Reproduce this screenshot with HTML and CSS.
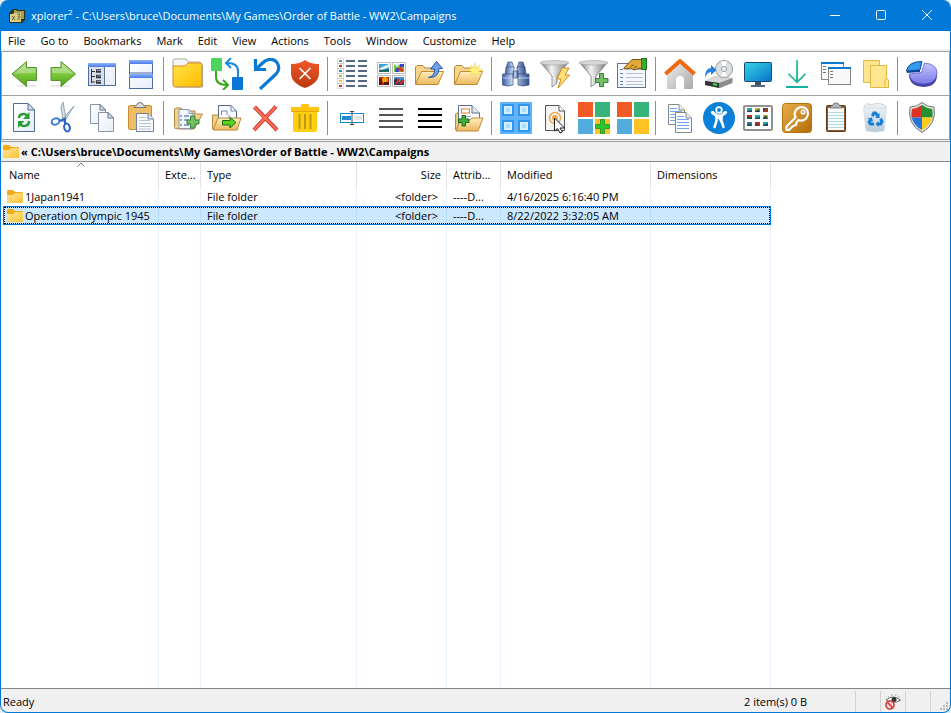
FILE: index.html
```html
<!DOCTYPE html>
<html lang="en">
<head>
<meta charset="utf-8">
<title>xplorer² - Campaigns</title>
<link rel="stylesheet" href="styles.css">
</head>
<body>
<svg class="defs" aria-hidden="true">
  <defs>
    <linearGradient id="gGreen" x1="0" y1="0" x2="0" y2="1"><stop offset="0" stop-color="#a9dc7c"/><stop offset=".5" stop-color="#7cc73c"/><stop offset="1" stop-color="#4ea313"/></linearGradient>
    <linearGradient id="gPaper" x1="0" y1="0" x2="1" y2="1"><stop offset="0" stop-color="#fff"/><stop offset="1" stop-color="#e6edf9"/></linearGradient>
    <linearGradient id="gBar" x1="0" y1="0" x2="0" y2="1"><stop offset="0" stop-color="#8db2fb"/><stop offset="1" stop-color="#4a7bea"/></linearGradient>
    <linearGradient id="gYellow" x1="0" y1="0" x2="1" y2="1"><stop offset="0" stop-color="#ffe648"/><stop offset="1" stop-color="#ffb900"/></linearGradient>
    <linearGradient id="gFold" x1="0" y1="0" x2="0" y2="1"><stop offset="0" stop-color="#fff0bd"/><stop offset="1" stop-color="#edb75c"/></linearGradient>
    <linearGradient id="gSmall" x1="0" y1="0" x2="1" y2="1"><stop offset="0" stop-color="#ffe597"/><stop offset="1" stop-color="#fbc335"/></linearGradient>
    <linearGradient id="gMetal" x1="0" y1="0" x2="1" y2="0"><stop offset="0" stop-color="#777"/><stop offset=".4" stop-color="#f4f4f4"/><stop offset="1" stop-color="#777"/></linearGradient>
    <linearGradient id="gSteel" x1="0" y1="0" x2="1" y2="0"><stop offset="0" stop-color="#3c5fa0"/><stop offset=".4" stop-color="#d5e3fa"/><stop offset="1" stop-color="#2c4a88"/></linearGradient>
    <linearGradient id="gHouse" x1="0" y1="0" x2="1" y2="1"><stop offset="0" stop-color="#eee"/><stop offset="1" stop-color="#aaa"/></linearGradient>
    <linearGradient id="gScreen" x1="0" y1="0" x2="1" y2="1"><stop offset="0" stop-color="#35d5e4"/><stop offset="1" stop-color="#0872ca"/></linearGradient>
    <linearGradient id="gDown" x1="0" y1="0" x2="0" y2="1"><stop offset="0" stop-color="#45cf8a"/><stop offset="1" stop-color="#10b0a2"/></linearGradient>
    <linearGradient id="gShield" x1="0" y1="0" x2="0" y2="1"><stop offset="0" stop-color="#f2582a"/><stop offset="1" stop-color="#b93a0e"/></linearGradient>
    <linearGradient id="gKey" x1="0" y1="0" x2="1" y2="1"><stop offset="0" stop-color="#e9ae4b"/><stop offset="1" stop-color="#b36c09"/></linearGradient>
    <linearGradient id="gPie" x1="0" y1="0" x2="0" y2="1"><stop offset="0" stop-color="#c6c6ff"/><stop offset="1" stop-color="#7a7ae8"/></linearGradient>
    <linearGradient id="gBin" x1="0" y1="0" x2="0" y2="1"><stop offset="0" stop-color="#e9f0f5"/><stop offset="1" stop-color="#b9cbd8"/></linearGradient>
    <symbol id="small-folder" viewBox="0 0 16 13"><path d="M0 2Q0 0 1 0H6L8 2H15Q16 2 16 3V12Q16 13 15 13H1Q0 13 0 12Z" fill="#f3ab13"/><path d="M0 5H6L8 3H16V12Q16 13 15 13H1Q0 13 0 12Z" fill="url(#gSmall)"/></symbol>
    <symbol id="open-folder" viewBox="0 0 32 32"><path d="M1.5 26V9L3 7.5H9L11 10H24.500V14" fill="#f5d58b" stroke="#b98a3c"/><path d="M1.500 26.500L7.500 13.500H29.500L24 26.500Z" fill="url(#gFold)" stroke="#c38a35"/></symbol>
    <symbol id="funnel" viewBox="0 0 32 32"><path d="M2 5L13 18V29L18 25V18L29 5Z" fill="url(#gMetal)" stroke="#777" stroke-width=".8"/><ellipse cx="15.500" cy="4.800" rx="14.500" ry="2.200" fill="#d7d7d7" stroke="#aaa" stroke-width=".7"/></symbol>
    <symbol id="sheet" viewBox="0 0 16 20"><path d="M.5.5H10L15.500 6V19.500H.5Z" fill="url(#gPaper)" stroke="#8794ab"/><path d="M10 .5V6H15.500Z" fill="#dce5f4" stroke="#60718f"/></symbol>
    <symbol id="lined-sheet" viewBox="0 0 17 21"><path d="M.5.5H11L16.500 6V20.500H.5Z" fill="#fff" stroke="#878787"/><path d="M11 .5V6H16.500" fill="#eee" stroke="#878787"/><path d="M2 4.500H9M2 7.500H14M2 10.500H14M2 13.500H14M2 16.500H14" stroke="#6da9f3"/></symbol>
  </defs>
</svg>

<div class="window">
  <header class="titlebar">
    <svg class="app-icon" viewBox="0 0 16 14"><path d="M4 0H8L9 1H16V11L13 14H0V4Z" fill="#34301a"/><path d="M5 1H7L8 2H15V10H5Z" fill="#a89f56"/><path d="M1 5H4L5 4H12V13H1Z" fill="#d8cf85"/><path d="M3 7L6 11M6 7L3 11M8 5H11L9 8H12M8 10H11" stroke="#5b5428" fill="none" stroke-width=".8"/></svg>
    <h1 class="title">xplorer<sup>2</sup> - C:\Users\bruce\Documents\My Games\Order of Battle - WW2\Campaigns</h1>
    <button class="caption" aria-label="Minimize"><svg viewBox="0 0 12 12"><path d="M1 5.500H11"/></svg></button>
    <button class="caption" aria-label="Maximize"><svg viewBox="0 0 12 12"><rect x="1.500" y=".5" width="9" height="9" rx="1"/></svg></button>
    <button class="caption" aria-label="Close"><svg viewBox="0 0 12 12"><path d="M1 0L11 10M11 0L1 10"/></svg></button>
  </header>

  <nav class="menubar" aria-label="Menu">
    <button>File</button><button>Go to</button><button>Bookmarks</button><button>Mark</button><button>Edit</button><button>View</button><button>Actions</button><button>Tools</button><button>Window</button><button>Customize</button><button>Help</button>
  </nav>

  <section class="toolbars">
    <div class="toolbar" role="toolbar" aria-label="Navigation">
      <div class="group">
        <button aria-label="Back"><svg viewBox="0 0 32 32"><ellipse cx="19" cy="28" rx="11" ry="1.500" fill="#e9e9e9"/><path d="M4 16L18.500 3.500V9.500H28.500V22.500H18.500V28.500Z" fill="url(#gGreen)" stroke="#579331"/><path d="M6 15.500L17.500 6V10.500H27.500V15Z" fill="#fff" opacity=".3"/></svg></button>
        <button aria-label="Forward"><svg viewBox="0 0 32 32"><ellipse cx="13" cy="28" rx="11" ry="1.500" fill="#e9e9e9"/><path d="M28.500 16L14 3.500V9.500H4V22.500H14V28.500Z" fill="url(#gGreen)" stroke="#579331"/><path d="M26.500 15.500L15 6V10.500H5V15Z" fill="#fff" opacity=".3"/></svg></button>
        <button aria-label="Folder tree"><svg viewBox="0 0 32 32"><rect x="2.500" y="5.500" width="27" height="22" fill="url(#gPaper)" stroke="#4c6b9e"/><rect x="2" y="5" width="28" height="4" fill="url(#gBar)"/><rect x="3" y="9" width="15" height="18" fill="#d9dfe9"/><path d="M18.500 9V28" stroke="#59749f"/><path d="M5.500 11V25M6 13.500H9M6 18.500H9M6 24H9" stroke="#333" fill="none"/><path d="M10 13H15M10 18.500H15M10 24H15" stroke="#334" stroke-width="3.500"/><path d="M11 12.500H15M11 18H15M11 23.500H15" stroke="#99a"/></svg></button>
        <button aria-label="Split panes"><svg viewBox="0 0 32 32"><rect x="4.500" y="2.500" width="23" height="28" fill="url(#gPaper)" stroke="#4c6b9e"/><rect x="4" y="2" width="24" height="4" fill="url(#gBar)"/><path d="M5 15H27" stroke="#4c6b9e"/><rect x="4" y="16" width="24" height="4" fill="url(#gBar)"/></svg></button>
      </div>
      <div class="group">
        <button aria-label="Open folder"><svg viewBox="0 0 32 32"><path d="M1 8V3Q1 1 3 1H14L16 4H27Q29 4 29 6V8" fill="#f6f6f6" stroke="#aaa"/><path d="M1 8H13L16 5H28Q30 5 30 7V26Q30 29 28 29H3Q1 29 1 26Z" fill="url(#gYellow)" stroke="#e3831b"/><path d="M30.500 7V29H4" fill="none" stroke="#b3a482"/></svg></button>
        <button aria-label="Swap panes"><svg viewBox="0 0 32 32"><rect width="11" height="13" rx="1" fill="#4cd45f"/><rect x="21" y="19" width="11" height="13" rx="1" fill="#0876d5"/><path d="M5 13V19Q5 27 16 27M12 22L17 27L12 32" fill="none" stroke="#39a51d" stroke-width="2"/><path d="M27 19V13Q27 5 16 5M20 0L15 5L20 10" fill="none" stroke="#178be0" stroke-width="2"/></svg></button>
        <button aria-label="Undo"><svg viewBox="0 0 32 32"><path d="M5.500 1V11.500H16M5.500 11.500L12 5.500C17 .5 23 0 26.500 4C30 8 29 13 26 16L10 31" fill="none" stroke="#0b78d4" stroke-width="3.200"/></svg></button>
        <button aria-label="Stop"><svg viewBox="0 0 32 32"><path d="M16 2Q21 6 30 6V15Q30 25 16 30Q2 25 2 15V6Q11 6 16 2Z" fill="url(#gShield)"/><path d="M10.500 10L21.500 21M21.500 10L10.500 21" stroke="#fff" stroke-width="1.700"/></svg></button>
      </div>
      <div class="group">
        <button aria-label="Details view"><svg viewBox="0 0 32 32"><rect x="1.500" y=".5" width="6" height="30" fill="#fff" stroke="#ddd"/><path d="M1 5.500H8M1 10.500H8M1 15.500H8M1 20.500H8M1 25.500H8" stroke="#ccc"/><path d="M3 3H6" stroke="#55a277" stroke-width="2"/><path d="M3 8H6M3 28H6" stroke="#e92c20" stroke-width="2"/><path d="M3 13H6" stroke="#248ee6" stroke-width="2"/><path d="M3 18H6" stroke="#97c61b" stroke-width="2"/><path d="M3 23H6" stroke="#e7ce23" stroke-width="2"/><path d="M10 3H19M22 3H31M10 8H19M22 8H31M10 13H19M22 13H31M10 18H19M22 18H31M10 23H19M22 23H31M10 28H19M22 28H31" stroke="#546986" stroke-width="2"/></svg></button>
        <button aria-label="Thumbnails"><svg viewBox="0 0 32 32"><g fill="#fff" stroke="#bbb"><path d="M2.500 4.500H15.500V15.500H2.500ZM17.500 4.500H30.500V15.500H17.500ZM2.500 17.500H15.500V28.500H2.500ZM17.500 17.500H30.500V28.500H17.500Z"/></g><path d="M4 6H14V14H4Z" fill="#35a3dc"/><path d="M4 11L7 9L14 6V9L8 12L14 13V14H4Z" fill="#e5f2ec"/><path d="M4 12L14 11V14H4Z" fill="#1c6b60"/><path d="M19 6H29V14H19Z" fill="#71c22e"/><path d="M19 6H25L22 9Z" fill="#dcecff"/><path d="M21 10H24V14H20ZM25 6H29V9H25Z" fill="#3c43cd"/><path d="M24 10L28 13" stroke="#ec2d17" stroke-width="3"/><path d="M4 19H14V27H4Z" fill="#c21b0c"/><circle cx="10" cy="22" r="3" fill="#f1a20c"/><path d="M4 21H7V27H4ZM9 24H14V27H9Z" fill="#571610"/><path d="M19 19H29V27H19Z" fill="#3f90d3"/><path d="M19 27V22L22 20L24 25L27 21L29 24V27Z" fill="#213a5d"/><path d="M21 26L24 21M25 26L29 22" stroke="#e52b1b" stroke-width="2"/></svg></button>
        <button aria-label="Parent folder"><svg viewBox="0 0 32 32"><use href="#open-folder"/><path d="M14.500 19.500Q21 18 20.500 11H16.500L22.500 3.500L28.500 10.500H25Q25 20 14.500 19.500Z" fill="#6da0e7" stroke="#2a58aa"/></svg></button>
        <button aria-label="New folder"><svg viewBox="0 0 32 32"><use href="#open-folder"/><path d="M22 5L23.200 10L27 7L25 11L30 12L25.500 13.500L27 18L23.200 15L22 19L20.500 15L17 18L18.500 13.500L14 12L18.500 10.500L17 7L20.500 10Z" fill="#fff37e" stroke="#f0d050" stroke-width=".6"/></svg></button>
      </div>
      <div class="group">
        <button aria-label="Find"><svg viewBox="0 0 32 32"><g stroke="#385586" stroke-width=".7" fill="url(#gSteel)"><path d="M8 4H12L14 10H6ZM19 4H23L25 10H17Z"/><path d="M6 9H14V17H5ZM17 9H25L26 17H17Z"/><path d="M2.500 16H13V27Q8 29 2.500 27ZM18 16H29V27Q23 29 18 27Z"/><path d="M13 13H18V20H13Z"/></g><path d="M3 20H13M18 20H29" stroke="#b9cdf0"/></svg></button>
        <button aria-label="Quick filter"><svg viewBox="0 0 32 32"><use href="#funnel"/><path d="M23 10H30L26 17H30.500L19 30L22 21H18Z" fill="#ffe078" stroke="#cf8b21"/></svg></button>
        <button aria-label="Add filter"><svg viewBox="0 0 32 32"><use href="#funnel"/><path d="M21.500 15.500H25.500V20.500H30V24.500H25.500V28.500H21.500V24.500H17.500V20.500H21.500Z" fill="#75bd67" stroke="#32852e"/></svg></button>
        <button aria-label="Properties"><svg viewBox="0 0 32 32"><rect x=".5" y="5.500" width="28" height="24" fill="#f5f8fe" stroke="#64748e"/><path d="M3 11.500H6M3 15.500H6M3 19.500H6M3 23.500H6M3 26.500H6" stroke="#6585b5"/><path d="M9 11.500H26M9 15.500H26M9 19.500H26M9 23.500H26M9 26.500H26" stroke="#bbc1ce"/><path d="M6.500 10.500L15 1.500H25V10L20 11L17 12L14 10L8 11Z" fill="#e3aa39" stroke="#795411"/><path d="M14 8L17 7M17 10L20 8" stroke="#795411"/><rect x="24.500" y=".5" width="5" height="11" fill="#36ad30" stroke="#247224"/></svg></button>
      </div>
      <div class="group">
        <button aria-label="Home"><svg viewBox="0 0 32 32"><path d="M3 15L16 4L29 15V30Q29 31 28 31H20V22Q20 18 16 18Q12 18 12 22V31H4Q3 31 3 30Z" fill="url(#gHouse)"/><path d="M1.500 16L16 3L30.500 16" fill="none" stroke="#ee6910" stroke-width="4" stroke-linejoin="round"/></svg></button>
        <button aria-label="Drives"><svg viewBox="0 0 32 32"><path d="M2 23L12 18L29.500 20V25L17 30L2 27Z" fill="#8c8c8c"/><path d="M2 23L12 18L29.500 20L16 25Z" fill="#d8d8d8"/><path d="M2 23L16 25V30L2 27Z" fill="#343434"/><path d="M10 26L14 27" stroke="#33e043" stroke-width="2"/><circle cx="21" cy="11" r="8.500" fill="#dce0e2" stroke="#9a9a9a"/><path d="M21 11L18 3.500L24 3.500ZM21 11L18 18.500H24Z" fill="#fff"/><circle cx="21" cy="11" r="2.500" fill="#f4f4f4" stroke="#999"/><path d="M2 20Q2 10 8 10V7L13.500 12L8 17V14Q4 14 2 20Z" fill="#2581dc"/></svg></button>
        <button aria-label="Computer"><svg viewBox="0 0 32 32"><rect x="2.500" y="4.500" width="27" height="19" rx="1" fill="url(#gScreen)" stroke="#144a73"/><path d="M13 24H19V27H13Z" fill="#3f5366"/><path d="M9 28H23" stroke="#56697a" stroke-width="2"/></svg></button>
        <button aria-label="Downloads"><svg viewBox="0 0 32 32"><path d="M15 2H17V22L24 15L25 16.500L16 25.500L7 16.500L8 15L15 22ZM5 28H27V30H5Z" fill="url(#gDown)"/></svg></button>
        <button aria-label="New window"><svg viewBox="0 0 32 32"><g fill="#f9f9f9" stroke="#888"><rect x="1.500" y="4.500" width="22" height="17"/><rect x="8.500" y="9.500" width="22" height="17"/></g><path d="M1 5H24M8 10H31" stroke="#0c79d5" stroke-width="2"/><path d="M3 8.500H6M3 11.500H6M3 14.500H6M10 13.500H13M10 16.500H13M10 19.500H13" stroke="#777"/></svg></button>
        <button aria-label="Copy folders"><svg viewBox="0 0 32 32"><g fill="#ffe690" stroke="#dfb846"><path d="M4.500 2.500H20.500V24.500H4.500Z"/><path d="M11.500 7.500H27.500V20.500L29.500 22V29.500H11.500Z"/><path d="M27.500 20.500L26 22V29.500H29.500V22Z"/></g></svg></button>
      </div>
      <div class="group">
        <button aria-label="Disk usage"><svg viewBox="0 0 32 32"><path d="M3 16H31V18Q30 29 17 29Q4 28 3 18Z" fill="#4343a2"/><path d="M15.500 14.500L18.500 5Q31 6 31 15Q30 26 17 26Q4 25 3 16Z" fill="url(#gPie)" stroke="#5353bf" stroke-width=".7"/><path d="M.5 13Q2 3.500 16 3.500L14 12Z" fill="#3798f0" stroke="#0d4b97"/><path d="M.5 13L14 12V14L1 15Z" fill="#0b4998"/></svg></button>
      </div>
    </div>

    <div class="toolbar" role="toolbar" aria-label="Actions">
      <div class="group">
        <button aria-label="Refresh"><svg viewBox="0 0 32 32"><path d="M5.500 1.500H20L26.500 8V29.500H5.500Z" fill="url(#gPaper)" stroke="#536b91"/><path d="M20 1.500V8H26.500Z" fill="#dce7f5" stroke="#536b91"/><path d="M11 16Q11 12 16 12Q18 12 19.500 14M21 19Q21 24 16 24Q13 24 12 22" fill="none" stroke="#2c9d36" stroke-width="2.500"/><path d="M21.500 10V17H15ZM10 26V19H16.500Z" fill="#2c9d36"/></svg></button>
        <button aria-label="Cut"><svg viewBox="0 0 32 32"><path d="M16 0L19 17L16 19L14 5ZM27 4L17 20L14 19Z" fill="#d5dfe8" stroke="#8193a3" stroke-width=".8"/><ellipse cx="8.500" cy="19.500" rx="4" ry="3" transform="rotate(-20 8.500 19.500)" fill="none" stroke="#3e7bd8" stroke-width="2"/><ellipse cx="20" cy="25.500" rx="2.800" ry="4" transform="rotate(-15 20 25.500)" fill="none" stroke="#2865c8" stroke-width="2"/><path d="M12 19L18 17L18 22" fill="none" stroke="#2865c8" stroke-width="2"/></svg></button>
        <button aria-label="Copy"><svg viewBox="0 0 32 32"><use href="#sheet" x="4" y="2" width="16" height="20"/><use href="#sheet" x="12" y="10" width="16" height="20"/></svg></button>
        <button aria-label="Paste"><svg viewBox="0 0 32 32"><rect x="3.500" y="3.500" width="23" height="24" rx="1.500" fill="#efbd63" stroke="#c68c36"/><path d="M9 5.500Q9 4 12 3Q12 .5 15 .5Q18 .5 18 3Q21 4 21 5.500Z" fill="#ddd" stroke="#777"/><path d="M11.500 11.500H23L28.500 17V29.500H11.500Z" fill="#f8fafd" stroke="#71809b"/><path d="M23 11.500V17H28.500" fill="#dfe7f3" stroke="#71809b"/><path d="M14 15.500H21M14 18.500H25M14 21.500H26M14 24.500H26M14 27H26" stroke="#bbc3d1"/></svg></button>
      </div>
      <div class="group">
        <button aria-label="Copy to"><svg viewBox="0 0 32 32"><path d="M2.500 25V7L4 6H9L11 9H23V14" fill="#efd18c" stroke="#ad843c"/><path d="M2 26L8 27H22L30.500 12H20" fill="#f3d391" stroke="#b88a3d"/><path d="M7 7.500H17L21 11.500V26.500H7Z" fill="#f4f8fe" stroke="#8a9ab5"/><path d="M17 7.500V11.500H21" fill="none" stroke="#8a9ab5"/><path d="M8 14H10M8 18H10M8 23H10M12 14H17M12 18H17M12 23H17" stroke="#6f8dba" stroke-width="1.500"/><path d="M18.500 14H23V18H27V22H23V26H18.500V22H15V18H18.500Z" fill="#74c064" stroke="#3c8439"/></svg></button>
        <button aria-label="Move to"><svg viewBox="0 0 32 32"><path d="M1.500 27V13H8L10 15H26" fill="#efd18c" stroke="#b78b3d"/><path d="M7.500 3.500H20L25.500 9V20H7.500Z" fill="#f8faff" stroke="#576982"/><path d="M20 3.500V9H25.500M10.500 13V9H16V13M18 13V17" fill="none" stroke="#7589aa"/><path d="M2 28L7 16H30L26 28Z" fill="url(#gFold)" stroke="#b78b3d"/><path d="M11.500 18.500H19V15.500L25 20.500L19 26V23H11.500Z" fill="#58d322" stroke="#176e14"/></svg></button>
        <button aria-label="Delete"><svg viewBox="0 0 32 32"><path d="M4.500 5L27 28M26 4.500L4 28" stroke="#c93227" stroke-width="4"/><path d="M4.500 5L27 28M26 4.500L4 28" stroke="#ff6b55" stroke-width="2.400"/></svg></button>
        <button aria-label="Recycle"><svg viewBox="0 0 32 32"><path d="M2 5H12V3Q12 2 13 2H19Q20 2 20 3V5H30V10H2Z" fill="#ffc50e"/><path d="M4 10H28V28Q28 30 26 30H6Q4 30 4 28Z" fill="#ffd012"/><path d="M2 9.500H30" stroke="#e6a500"/><path d="M10.500 12V27M16 12V27M21.500 12V27" stroke="#c49613" stroke-width="2"/></svg></button>
      </div>
      <div class="group">
        <button aria-label="Rename"><svg viewBox="0 0 32 32"><rect x="4.500" y="11.500" width="23" height="9" fill="#fff" stroke="#178ac9"/><rect x="6" y="14" width="9" height="4" fill="#258bd1"/><rect x="18" y="14" width="8" height="4" fill="#e5e5e5"/><path d="M14 9.500H18M16 9V22M14 22.500H18" fill="none" stroke="#444"/></svg></button>
        <button aria-label="Thin lines"><svg viewBox="0 0 32 32"><path d="M4 7H28M4 13H28M4 19H28M4 25H28" stroke="#555" stroke-width="2"/></svg></button>
        <button aria-label="Bold lines"><svg viewBox="0 0 32 32"><path d="M4 7H28M4 13H28M4 19H28M4 25H28" stroke="#000" stroke-width="2"/></svg></button>
        <button aria-label="Add bookmark"><svg viewBox="0 0 32 32"><path d="M2.500 28V12L4 11H9V14H25V18" fill="#efcb80" stroke="#b78b3d"/><path d="M5.500 3.500H19L26.500 11V22H5.500Z" fill="#f8faff" stroke="#60728d"/><path d="M19 3.500V11H26.500" fill="#dbe8f6" stroke="#60728d"/><rect x="8.500" y="7" width="8" height="4" fill="#fff" stroke="#e38324"/><path d="M9 14.500H18M19 17H24" stroke="#98a8bf"/><path d="M3 29L7 19L17 18L19 16H30L25 29Z" fill="url(#gFold)" stroke="#bc8d3d"/><path d="M9 13.500H12.500V17H16V20.500H12.500V24H9V20.500H5.500V17H9Z" fill="#48ad3c" stroke="#14702a"/></svg></button>
      </div>
      <div class="group">
        <button aria-label="Large icons"><svg viewBox="0 0 32 32"><rect width="32" height="32" fill="#61b3fc"/><g fill="#d8efff" stroke="#2e97ee" stroke-width="2"><rect x="3" y="3" width="10" height="10"/><rect x="19" y="3" width="10" height="10"/><rect x="3" y="19" width="10" height="10"/><rect x="19" y="19" width="10" height="10"/></g><g fill="#b0dafa"><path d="M6 6H10V10H6ZM22 6H26V10H22ZM6 22H10V26H6ZM22 22H26V26H22Z"/></g></svg></button>
        <button aria-label="Select item"><svg viewBox="0 0 32 32"><path d="M6.500 3.500H20L25.500 9V28.500H6.500Z" fill="#f5f5f5" stroke="#555"/><path d="M20 3.500V9H25.500" fill="#fff" stroke="#555"/><circle cx="16" cy="16" r="5.500" fill="none" stroke="#efa94b" stroke-width="1.500"/><circle cx="16" cy="16" r="3" fill="#efa94b"/><path d="M15.500 16L25.500 26H21L23.500 30L21 31L18.500 26.500L15.500 29Z" fill="#fff" stroke="#222"/></svg></button>
        <button aria-label="Add color group"><svg viewBox="0 0 32 32"><path d="M0 0H15V15H0Z" fill="#f15a25"/><path d="M17 0H32V15H17Z" fill="#36b47c"/><path d="M0 17H15V32H0Z" fill="#52addd"/><path d="M17 17H32V32H17Z" fill="#ffc326"/><path d="M22.500 17.500H26.500V22.500H31.500V26.500H26.500V31.500H22.500V26.500H17.500V22.500H22.500Z" fill="#27c730" stroke="#329b25"/></svg></button>
        <button aria-label="Color groups"><svg viewBox="0 0 32 32"><path d="M0 0H15V15H0Z" fill="#f15a25"/><path d="M17 0H32V15H17Z" fill="#36b47c"/><path d="M0 17H15V32H0Z" fill="#52addd"/><path d="M17 17H32V32H17Z" fill="#ffc326"/></svg></button>
      </div>
      <div class="group">
        <button aria-label="Copy text"><svg viewBox="0 0 32 32"><use href="#lined-sheet" x="4" y="2" width="17" height="21"/><use href="#lined-sheet" x="11" y="10" width="17" height="21"/></svg></button>
        <button aria-label="Accessibility"><svg viewBox="0 0 32 32"><circle cx="16" cy="16" r="16" fill="#0b80d8"/><circle cx="16" cy="8" r="2.800" fill="none" stroke="#fff" stroke-width="1.800"/><path d="M9.500 10.500L14 14H18L22.500 10.500" fill="none" stroke="#fff" stroke-width="3.200" stroke-linecap="round"/><path d="M13.500 14H18.500V19L20.500 25M13.500 14V19L11.500 25" fill="#fff" stroke="#fff" stroke-width="2.500" stroke-linecap="round"/><path d="M14.500 23L16 19.500L17.500 23Z" fill="#0b80d8"/></svg></button>
        <button aria-label="Image grid"><svg viewBox="0 0 32 32"><rect x="2" y="4" width="28" height="24" rx="1" fill="#fff" stroke="#929292" stroke-width="2"/><path d="M5 6H10V10H5ZM13 13H18V17H13ZM21 20H26V24H21Z" fill="#2ba5ae"/><path d="M13 6H18V10H13ZM21 13H26V17H21Z" fill="#d3ae22"/><path d="M21 6H26V10H21ZM5 13H10V17H5ZM13 20H18V24H13Z" fill="#b33418"/><path d="M5 20H10V24H5Z" fill="#397ebd"/><path d="M5 9L10 8V10H5ZM13 9L17 7L18 10H13ZM21 6H23V9H21ZM5 15H10V17H5ZM13 16L18 15V17H13ZM21 16L24 13L26 17H21ZM5 23L8 21L10 24H5ZM13 22H16V24H13ZM21 23L26 21V24H21Z" fill="#234d57"/></svg></button>
        <button aria-label="Permissions"><svg viewBox="0 0 32 32"><rect x="1.500" y="1.500" width="29" height="29" rx="3" fill="url(#gKey)" stroke="#b8730e"/><path d="M14.500 15.500C12 10 16 5 21 5C27 6 28 11 26 15C24 19 20 19 17.500 18L15.500 20.500L15 23L12 24L8 28H5.500V24.500Z" fill="none" stroke="#fff" stroke-width="2.200" stroke-linejoin="round"/><circle cx="22" cy="10" r="1.800" fill="none" stroke="#fff" stroke-width="1.500"/></svg></button>
        <button aria-label="Clipboard"><svg viewBox="0 0 32 32"><rect x="6.500" y="3.500" width="19" height="26" rx="1" fill="#8c5a2e" stroke="#5e3819"/><rect x="8" y="6" width="16" height="22" fill="#fbfdff"/><path d="M8 10.500H24M8 13.500H24M8 16.500H24M8 19.500H24M8 22.500H24M8 25.500H24" stroke="#b0d7ec"/><path d="M10 6Q10 4 13 3Q13 1 16 1Q19 1 19 3Q22 4 22 6Z" fill="#b5b5b5" stroke="#666" stroke-width=".8"/></svg></button>
        <button aria-label="Recycle bin"><svg viewBox="0 0 32 32"><path d="M5 4L8 1.500L13 3L17 1L23 2L27 4L26 8H6Z" fill="#eceef0" stroke="#c4c8cc" stroke-width=".7"/><path d="M4.500 6H27.500L25 29Q16 31 7 29Z" fill="url(#gBin)" stroke="#d2dde5" stroke-width=".8"/><g fill="#187cd6"><path d="M12 13L14 9.500H17.500L19 12L20.500 11V16H16L17.500 15L16 12.500L14.500 15Z"/><path d="M20.500 17L23 16L24.500 19.500L22.500 23.500H19.500V25L16.500 22L19.500 19V20.500H21Z"/><path d="M15 20.500V23.500H10.500L8.500 20L10 17.500L8.500 16.500L13 15.500L14 19.500L12.500 19L12 20.500Z"/></g></svg></button>
      </div>
      <div class="group">
        <button aria-label="Run as administrator"><svg viewBox="0 0 32 32"><path d="M16 .5Q21 5 28 5Q31 22 16 30.500Q1 22 4 5Q11 5 16 .5Z" fill="#ddd" stroke="#777"/><path d="M16 3V15.500H5.500Q5 11 6 7Q12 6 16 3Z" fill="#df3026"/><path d="M16 3V15.500H26.500Q27 11 26 7Q20 6 16 3Z" fill="#25902d"/><path d="M16 15.500V28Q8 24 5.500 15.500Z" fill="#2775d6"/><path d="M16 15.500V28Q24 24 26.500 15.500Z" fill="#ffcc20"/></svg></button>
      </div>
    </div>
  </section>

  <div class="pathbar"><svg class="folder" aria-hidden="true"><use href="#small-folder"/></svg><strong>« C:\Users\bruce\Documents\My Games\Order of Battle - WW2\Campaigns</strong></div>

  <main class="pane">
    <table class="files">
      <colgroup><col class="w-name"><col class="w-ext"><col class="w-type"><col class="w-size"><col class="w-attr"><col class="w-date"><col class="w-dim"></colgroup>
      <thead>
        <tr><th class="sorted">Name<svg viewBox="0 0 8 5" aria-hidden="true"><path d="M.5 4.500L4 1L7.500 4.500"/></svg></th><th>Exte...</th><th>Type</th><th class="num">Size</th><th>Attrib...</th><th>Modified</th><th>Dimensions</th></tr>
      </thead>
      <tbody>
        <tr><td><span class="name"><svg class="folder" aria-hidden="true"><use href="#small-folder"/></svg>1Japan1941</span></td><td></td><td>File folder</td><td class="num">&lt;folder&gt;</td><td>----D...</td><td>4/16/2025 6:16:40 PM</td><td></td></tr>
        <tr class="selected"><td><span class="name"><svg class="folder" aria-hidden="true"><use href="#small-folder"/></svg>Operation Olympic 1945</span></td><td></td><td>File folder</td><td class="num">&lt;folder&gt;</td><td>----D...</td><td>8/22/2022 3:32:05 AM</td><td></td></tr>
        <tr class="rest"><td></td><td></td><td></td><td></td><td></td><td></td><td></td></tr>
      </tbody>
    </table>
  </main>

  <footer class="statusbar">
    <span class="ready">Ready</span>
    <span class="count">2 item(s) 0 B</span>
    <span class="cell"></span>
    <span class="cell"><svg class="eye" viewBox="0 0 16 16"><path d="M1 6Q8 0 15.500 6Q8 11 1 6Z" fill="#fff" stroke="#666"/><circle cx="9" cy="5.500" r="2.500" fill="#333"/><path d="M3 2L4 3.500M7 0V2M11 .5L10.500 2M14.500 2L13 3.500" stroke="#888" stroke-width=".7"/><circle cx="5" cy="11" r="4" fill="#f6dada" stroke="#d33a35" stroke-width="1.600"/><path d="M2.500 8.500L7.500 13.500" stroke="#d33a35" stroke-width="1.600"/></svg></span>
    <span class="cell"></span>
    <span class="cell"><svg class="grip" viewBox="0 0 10 10"><path d="M7 0H9V2H7ZM4 3H6V5H4ZM7 3H9V5H7ZM1 6H3V8H1ZM4 6H6V8H4ZM7 6H9V8H7Z" fill="#b9b9b9"/></svg></span>
  </footer>
</div>
</body>
</html>
```
FILE: styles.css
```css
* { box-sizing: border-box; }

html, body { height: 100%; margin: 0; }

body {
  background: #e8eef3;
  color: #000;
  font: 11px/16px "Segoe UI", "Open Sans", "Noto Sans", sans-serif;
}

button {
  border: 0;
  padding: 0;
  background: none;
  color: inherit;
  font: inherit;
}

svg { display: block; }
.defs { position: absolute; width: 0; height: 0; }

.window {
  display: flex;
  flex-direction: column;
  height: 100vh;
  overflow: hidden;
  border: 1px solid #0078d4;
  border-top: 0;
  border-radius: 8px;
  background: #f0f0f0;
}

.titlebar {
  display: flex;
  flex: none;
  align-items: center;
  height: 31px;
  padding-left: 8px;
  background: #0078d7;
  color: #fff;
}
.app-icon { width: 16px; height: 14px; margin-right: 6px; }
.title { flex: 1; margin: 0; font-size: 11px; font-weight: 400; white-space: nowrap; }
.title sup { font-size: 8px; line-height: 0; }
.caption { width: 46px; height: 30px; display: grid; place-items: center; }
.caption svg { width: 12px; height: 12px; fill: none; stroke: #fff; }

.menubar { display: flex; flex: none; gap: 1px; height: 18px; background: #fff; }
.menubar button { padding: 0 7px; line-height: 20px; }

.toolbars {
  flex: none;
  margin-top: 2px;
  border: 1px solid #a0a0a0;
  background: #fff;
}
.toolbar { display: flex; height: 43px; padding: 1px 0 0 2px; }
.toolbar + .toolbar { height: 44px; border-top: 1px solid #a0a0a0; }
.group { display: flex; align-items: center; }
.group + .group::before {
  content: "";
  width: 1px;
  height: 34px;
  margin: 0 4px 0 3px;
  background: #8e8e8e;
}
.group button { width: 39px; padding: 0 3px 0 4px; }
.group svg { width: 32px; height: 32px; }

.pathbar {
  display: flex;
  flex: none;
  align-items: center;
  gap: 2px;
  height: 21px;
  margin-top: 1px;
  padding-left: 2px;
  border-top: 1px solid #a0a0a0;
  border-bottom: 1px solid #82878f;
}
.folder { flex: none; width: 16px; height: 13px; }

.pane { flex: 1; min-height: 0; padding-left: 2px; background: #fff; }

.files {
  width: 768px;
  height: 100%;
  border-collapse: separate;
  border-spacing: 0;
  table-layout: fixed;
}
.w-name { width: 156px; }
.w-ext { width: 42px; }
.w-type { width: 156px; }
.w-size { width: 90px; }
.w-attr { width: 54px; }
.w-date { width: 150px; }
.w-dim { width: 120px; }

.files th, .files td {
  padding: 0 5px 0 6px;
  border-right: 1px solid #e9f3fd;
  text-align: left;
  font-weight: 400;
  white-space: nowrap;
}
.files th { height: 25px; border-right-color: #e2e2e2; }
.files td { height: 19px; }
.files td:first-child { padding: 0 0 0 4px; }
.files .num { text-align: right; }
.files td.num { padding-right: 8px; }
.files .rest td { height: auto; }
.name { display: flex; align-items: center; gap: 2px; }

.sorted { position: relative; }
.sorted svg {
  position: absolute;
  top: 0;
  left: calc(50% - 4px);
  width: 8px;
  height: 5px;
  fill: none;
  stroke: #777;
}

.selected { position: relative; }
.selected td { background: #cce8ff; border-right-color: #b5dcfa; }
.selected::after {
  content: "";
  position: absolute;
  inset: 0;
  border: 1px solid #0078d7;
  outline: 1px dotted #000;
  outline-offset: -2px;
}

.statusbar {
  display: flex;
  flex: none;
  align-items: center;
  height: 24px;
  padding-top: 2px;
  border-top: 1px solid #82878f;
}
.ready { flex: 1; padding-left: 2px; }
.count { width: 111px; }
.cell { display: flex; align-items: center; width: 25px; height: 21px; padding-left: 4px; border-left: 1px solid #d4d4d4; }
.cell:last-child { width: 20px; align-items: flex-end; padding-left: 8px; }
.eye { width: 16px; height: 16px; }
.grip { width: 10px; height: 10px; }
```
